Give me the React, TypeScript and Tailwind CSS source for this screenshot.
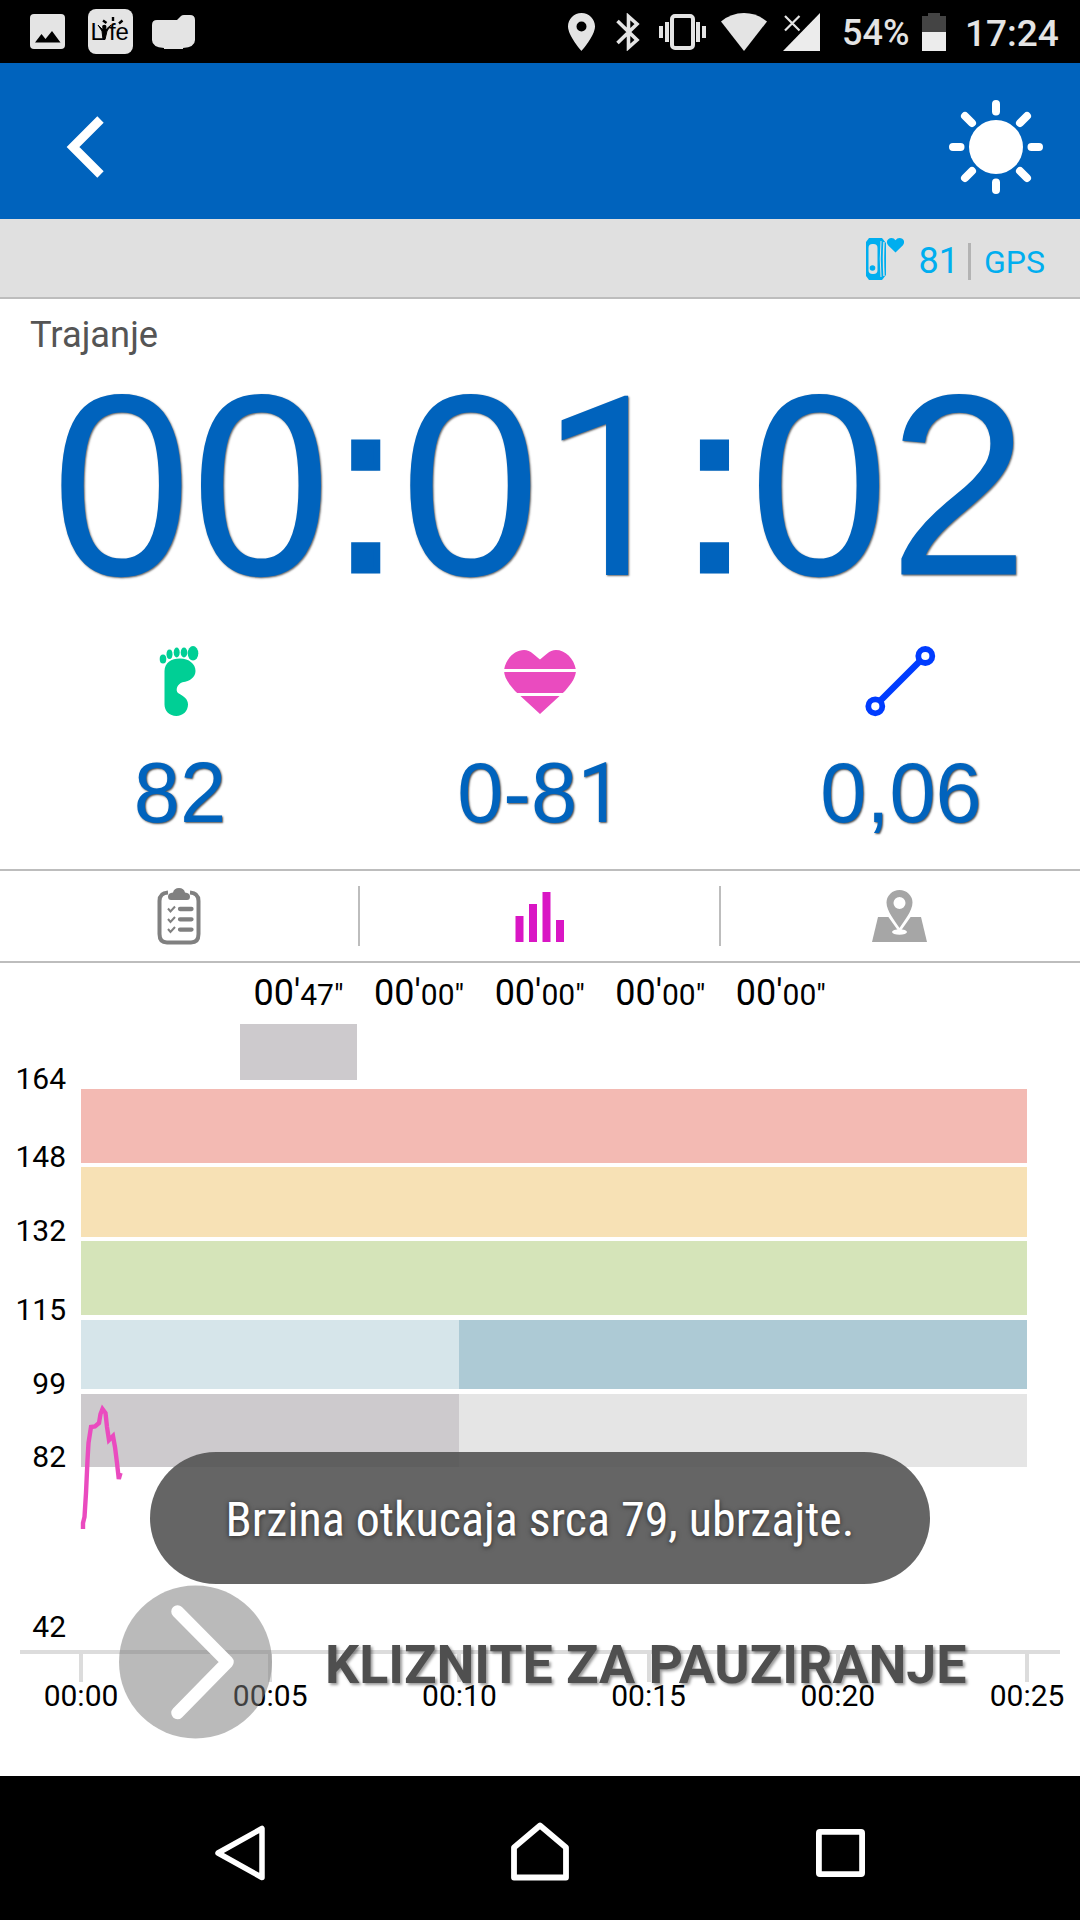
import React from 'react'
import clsx from 'clsx'

const zoneTimes = ['47', '00', '00', '00', '00']

const heartLabels = [
  { value: 164, height: 'h-[78px]' },
  { value: 148, height: 'h-[78px]' },
  { value: 132, height: 'h-[74px]' },
  { value: 115, height: 'h-[79px]' },
  { value: 99, height: 'h-[74px]' },
  { value: 82, height: 'h-[73px]' },
  { value: 42, height: 'h-[170px]' },
]

const minutes = ['00:00', '00:05', '00:10', '00:15', '00:20', '00:25']

const digits = "font-['Liberation_Sans',Arial,sans-serif] text-[#0063bd] leading-none"

const StatusBar = () => (
  <div className="flex h-[63px] items-center bg-black text-[#e4e4e4]">
    <svg className="ml-[30px] h-[35px] w-[35px]" viewBox="0 0 35 35">
      <rect width="35" height="35" rx="4" fill="#e4e4e4" />
      <path d="M5 28.5 L11.5 20 L15.5 25 L22 17 L30.5 28.5Z" fill="#000" />
    </svg>
    <svg className="ml-[23px] h-[45px] w-[45px]" viewBox="0 0 45 45">
      <rect width="45" height="45" rx="8" fill="#e4e4e4" />
      <text y="31" fontFamily="Liberation Sans, sans-serif" fontSize="24" fill="#000">
        <tspan x="2.5">L</tspan>
        <tspan x="21">f</tspan>
        <tspan x="27.5">e</tspan>
      </text>
      {/* the "y" of the logo is a figure with raised arms */}
      <circle cx="16.3" cy="18" r="2.2" fill="#000" />
      <path d="M10 16 L14 22 L15 30.5 H17 L19 22 L23 16 L18.5 20 H14Z" fill="#000" stroke="#000" strokeWidth="1" />
      <path d="M15 11.5 L18.5 14 M25 8 V12 M34.5 11.5 L31 14.5" stroke="#000" strokeWidth="2.4" />
    </svg>
    <svg className="ml-[19px] h-[34px] w-[43px]" viewBox="0 0 43 34">
      <path d="M5 5 H25 L29 1 Q30 0 32 0 H38 Q43 0 43 5 V25 Q43 32 31 33 V34 H12 V33 Q0 32 0 25 V10 Q0 5 5 5Z" fill="#e4e4e4" />
    </svg>

    <svg className="ml-[373px] h-[38px] w-[27px]" viewBox="0 0 27 38">
      <path fillRule="evenodd" d="M13.5 0 C6 0 0 6 0 13.3 C0 23 13.5 38 13.5 38 S27 23 27 13.3 C27 6 21 0 13.5 0Z M13.5 8.5 a5 5 0 1 1 0 10 a5 5 0 0 1 0 -10Z" fill="#e4e4e4" />
    </svg>
    <svg className="ml-[21px] h-[38px] w-[24px]" viewBox="0 0 24 38">
      <path d="M1.5 8 L21 27 L12.5 34.5 V3.5 L21 11 L1.5 30" stroke="#e4e4e4" strokeWidth="3.6" fill="none" />
    </svg>
    <svg className="ml-[19px] h-[36px] w-[47px]" viewBox="0 0 47 36">
      <rect x="13" y="2" width="21" height="32" rx="3" stroke="#e4e4e4" strokeWidth="4" fill="none" />
      <path d="M2 12 V24 M8 8 V28 M39 8 V28 M45 12 V24" stroke="#e4e4e4" strokeWidth="4" />
    </svg>
    <svg className="ml-[15px] h-[38px] w-[46px]" viewBox="0 0 46 38">
      <path d="M23 38 L0 8.5 Q10 0 23 0 T46 8.5Z" fill="#e4e4e4" />
    </svg>
    <svg className="ml-[16px] h-[38px] w-[37px]" viewBox="0 0 37 38">
      <path d="M37 0 V38 H0Z" fill="#ececec" />
      <path d="M2 3 L16.5 17.5 M16.5 3 L2 17.5" stroke="#e4e4e4" strokeWidth="2.2" />
    </svg>
    <span className="ml-[22px] mt-[3px] w-[71px] text-[36px] font-medium leading-none whitespace-nowrap">54%</span>
    <svg className="ml-[9px] h-[38px] w-[24px]" viewBox="0 0 24 38">
      <path d="M6 0 H18 V3 H24 V19 H0 V3 H6Z" fill="#444" />
      <path d="M0 19 H24 V38 H0Z" fill="#ececec" />
    </svg>
    <span className="ml-[19px] mt-[3px] text-[37px] font-medium leading-none">17:24</span>
  </div>
)

const Header = () => (
  <header className="flex h-[156px] items-center justify-between bg-[#0063bd] pl-[64px] pr-[35px]">
    <svg className="mt-[12px] h-[64px] w-[42px]" viewBox="0 0 42 64">
      <path d="M36.5 4.5 L9 32 L36.5 59.5" stroke="#fff" strokeWidth="9" fill="none" />
    </svg>
    <svg className="mt-[12px] h-[98px] w-[98px]" viewBox="-49 -49 98 98">
      <circle r="27" fill="#fff" />
      <path
        d="M0 -35.5 V-43 M0 35.5 V43 M-35.5 0 H-43 M35.5 0 H43 M-24 -24 L-31 -31 M24 -24 L31 -31 M-24 24 L-31 31 M24 24 L31 31"
        stroke="#fff"
        strokeWidth="8"
        strokeLinecap="round"
      />
    </svg>
  </header>
)

const DeviceBar = () => (
  <div className="flex h-[80px] items-center justify-end border-b-2 border-[#bdbdbd] bg-[#e0e0e0] pr-[35px] text-[#00aeef]">
    <svg className="mt-[2px] h-[42px] w-[38px]" viewBox="0 0 38 42">
      <path d="M3 0 H16 L20 5 V37 L16 42 H3 L0 38 V4Z" fill="#00aeef" />
      <rect x="2.5" y="6" width="9" height="30" rx="4" fill="#e0e0e0" />
      <circle cx="6.5" cy="30" r="2.8" fill="#00aeef" />
      <path d="M15 3 Q13.5 21 15 39" stroke="#e0e0e0" strokeWidth="1" fill="none" />
      <path d="M18 4 Q17 21 18 38" stroke="#e0e0e0" strokeWidth="1.4" fill="none" />
      <path d="M29.5 14.5 L22.3 7.5 C19 3.5 22 0 25.5 0 Q28 0 29.5 2.2 Q31 0 33.5 0 C37 0 40 3.5 36.7 7.5Z" fill="#00aeef" />
    </svg>
    <span className="ml-[15px] mt-[6px] text-[36px] leading-none">81</span>
    <span className="ml-[9px] mt-[6px] h-[37px] w-[3px] bg-[#b3b3b3]" />
    <span className="ml-[13px] mt-[8px] text-[32px] leading-none">GPS</span>
  </div>
)

const Colon = () => (
  <span className="px-[2.6px] align-[4px] text-[232px] leading-none [-webkit-text-stroke:7px_#0063bd] [stroke-linejoin:round]">:</span>
)

const Timer = () => (
  <div className="pt-[15px]">
    <p className="pl-[30px] text-[36.3px] leading-[42px] text-[#555]">Trajanje</p>
    <div className={clsx(digits, 'mt-[4px] h-[250px] scale-y-[1.03] text-center text-[251px] whitespace-nowrap [text-shadow:1px_1px_2px_rgba(0,0,0,0.6)]')}>
      00<Colon />0<span className="px-[1.2px] font-[Roboto] text-[244px] leading-none">1</span><Colon />02
    </div>
  </div>
)

const FootIcon = () => (
  <svg className="h-[72px] w-[42px]" viewBox="0 0 42 72">
    <g fill="#00cf95">
      <ellipse cx="4" cy="14" rx="3.3" ry="4.5" />
      <ellipse cx="10.5" cy="9.3" rx="3" ry="4.7" />
      <ellipse cx="17.7" cy="7.5" rx="3" ry="5" />
      <ellipse cx="25" cy="7.5" rx="3.3" ry="5" />
      <ellipse cx="34" cy="8.3" rx="5.3" ry="7.2" />
      <path d="M5.5 26 C5.5 18 12 13.5 21 13.5 C30 13.5 36.5 19 36.5 26 C36.5 32 31 36.5 23.5 37.3 C18.5 39 16 45 19 48 C25 51.5 29 54 29 59.5 C29 66 24 71 17.3 71 C10.5 71 5.5 66 5.5 59.5Z" />
    </g>
  </svg>
)

const HeartIcon = () => (
  <svg className="h-[72px] w-[74px]" viewBox="0 0 74 72">
    <path d="M37 69 L12 46 C5 38 1 32 1 25 C3 13 12 5 21 5 C28 5 32 11 37 14.5 C42 11 46 5 53 5 C62 5 71 13 73 25 C73 32 69 38 62 46Z" fill="#ea4bbf" />
    <path d="M0 25.5 H74 M0 49.5 H74" stroke="#fff" strokeWidth="3" />
  </svg>
)

const DistanceIcon = () => (
  <svg className="h-[72px] w-[72px]" viewBox="0 0 72 72">
    <path d="M17 55 L55 17" stroke="#003cff" strokeWidth="6.5" />
    <circle cx="61.3" cy="11" r="7" fill="#fff" stroke="#003cff" strokeWidth="5.8" />
    <circle cx="11.3" cy="61.3" r="7" fill="#fff" stroke="#003cff" strokeWidth="5.8" />
  </svg>
)

const value = "mt-[34px] scale-y-[1.028] text-[83px] whitespace-nowrap [text-shadow:1px_1px_2px_rgba(0,0,0,0.7)]"

const Metrics = () => (
  <div className="grid h-[259px] grid-cols-3 pt-[35px]">
    <div className="flex flex-col items-center">
      <FootIcon />
      <span className={clsx(digits, value)}>82</span>
    </div>
    <div className="flex flex-col items-center">
      <HeartIcon />
      <span className={clsx(digits, value)}>0-8<span className="pl-[0.5px] font-[Roboto] text-[80.5px] leading-none">1</span></span>
    </div>
    <div className="flex flex-col items-center">
      <DistanceIcon />
      <span className={clsx(digits, value, 'pl-[2px]')}>0,06</span>
    </div>
  </div>
)

const Tabs = () => (
  <div className="flex h-[94px] items-center border-y-2 border-[#bdbdbd]">
    <button className="flex h-[60px] w-[360px] items-center justify-center border-r-2 border-[#bdbdbd]">
      <svg className="h-[58px] w-[44px]" viewBox="0 0 44 58">
        <path d="M11 5.5 Q2.5 6 2.5 14 V47 Q2.5 55.5 10 55.5 H34 Q41.5 55.5 41.5 47 V14 Q41.5 6 33 5.5" stroke="#808080" strokeWidth="4" fill="none" />
        <path d="M14 13 Q11 13 11 9.5 Q11 6 16 5.5 Q17 1 22 1 Q27 1 28 5.5 Q33 6 33 9.5 Q33 13 30 13Z" fill="#808080" />
        <path d="M23 22 H34.5 M23 32.3 H34.5 M23 42.6 H34.5" stroke="#808080" strokeWidth="4.3" strokeLinecap="round" />
        <path d="M11 21.5 L13.5 24.5 L18 19.5 M11 32 L13.5 35 L18 30 M11 42 L13.5 45 L18 40" stroke="#808080" strokeWidth="2" fill="none" />
      </svg>
    </button>
    <button className="flex h-[60px] w-[361px] items-center justify-center border-r-2 border-[#bdbdbd]">
      <svg className="mt-[2px] h-[50px] w-[50px]" viewBox="0 0 50 50">
        <path d="M0.5 24 H8.5 V50 H0.5Z M14 12 H22 V50 H14Z M27.5 0 H35.5 V50 H27.5Z M41 28 H49 V50 H41Z" fill="#d916c4" />
      </svg>
    </button>
    <button className="flex h-[60px] w-[357px] items-center justify-center">
      <svg className="h-[52px] w-[55px]" viewBox="0 0 55 52">
        <path d="M6 27 H49 L55 52 H0Z" fill="#a6a6a6" />
        <ellipse cx="27.5" cy="42" rx="7.5" ry="2.8" fill="#fff" />
        <path d="M27.5 41 L15.5 24 H39.5Z" fill="#fff" stroke="#fff" strokeWidth="2" />
        <path fillRule="evenodd" d="M27.5 38 C23 31 14.5 21 14.5 12.5 A13 12.5 0 0 1 40.5 12.5 C40.5 21 32 31 27.5 38Z M27.5 7 a6 6 0 1 0 0 12 a6 6 0 0 0 0 -12Z" fill="#a6a6a6" />
      </svg>
    </button>
  </div>
)

const ZoneTimes = () => (
  <div className="flex gap-[3.6px] pl-[240px]">
    {zoneTimes.map((seconds, index) => (
      <div key={index} className="w-[117px]">
        <p className="h-[61px] pt-[9px] text-center text-[36px] leading-[42px] text-black">
          00'<span className="text-[30px]">{seconds}"</span>
        </p>
        <div className={clsx('h-[56px]', index === 0 && 'bg-[#cdcacd]')} />
      </div>
    ))}
  </div>
)

const HeartChart = () => (
  <div className="relative flex h-[696px]">
    <div className="-mt-[64px] flex w-[66px] flex-col text-right text-[30px] leading-[30px] text-black">
      {heartLabels.map((label) => (
        <div key={label.value} className={clsx('flex items-end justify-end', label.height)}>{label.value}</div>
      ))}
    </div>
    <div className="ml-[15px] flex w-[946px] flex-col pt-[9px]">
      <div className="h-[74px] bg-[#f3bab3]" />
      <div className="mt-[4px] h-[70px] bg-[#f7e1b5]" />
      <div className="mt-[4px] h-[74px] bg-[#d5e4b9]" />
      <div className="mt-[5px] flex h-[69px] bg-[#adcad5]">
        <div className="w-[378px] bg-[#d6e5ea]" />
      </div>
      <div className="mt-[5px] flex h-[73px] bg-[#e5e5e5]">
        <div className="w-[378px] bg-[#cdcacd]" />
      </div>
      <div className="-mx-[61px] mt-[183px] h-[4px] w-[1040px] bg-[#dcdcdc]" />
      <div className="-ml-[81px] flex w-[1110px]">
        {minutes.map((minute) => (
          <div key={minute} className="-mr-[0.8px] flex w-[190px] shrink-0 -translate-x-[14px] flex-col items-center">
            <div className="h-[28px] w-[4px] bg-[#dcdcdc]" />
            <span className="-mt-[1px] text-[30px] leading-[30px] text-black">{minute}</span>
          </div>
        ))}
      </div>
    </div>
    <svg className="absolute left-[76px] top-[310px] h-[150px] w-[60px]" viewBox="76 1390 60 150">
      <path
        d="M83 1529 V1523 L84.5 1517 L86 1493 L87.5 1460 L88.5 1443 L91 1427 L95 1426.5 L99 1423 L100.5 1414 L102.5 1409 L105.5 1413 L107 1427 L109 1440 L113 1436 L115 1447 L117 1463 L118.8 1479 L120.5 1473"
        stroke="#ea4bbf"
        strokeWidth="4.4"
        fill="none"
      />
    </svg>
  </div>
)

const PauseSlider = () => (
  <div className="absolute left-[118px] top-[1585px] flex h-[154px] items-center">
    <svg className="h-[154px] w-[155px]" viewBox="0 0 155 154">
      <circle cx="77.5" cy="77" r="76.5" fill="#7b7b7b" fillOpacity="0.52" />
      <path d="M59.5 26.5 L109.5 77 L59.5 128" stroke="#fff" strokeWidth="12.5" strokeLinecap="round" strokeLinejoin="round" fill="none" />
    </svg>
    <span className="ml-[52px] mt-[5px] text-[53.7px] font-bold leading-none text-[#4f4f4f] whitespace-nowrap [text-shadow:2px_2px_3px_rgba(0,0,0,0.4)]">
      KLIZNITE ZA PAUZIRANJE
    </span>
  </div>
)

const Toast = () => (
  <div className="absolute left-[150px] top-[1452px] flex h-[132px] w-[780px] items-center justify-center rounded-full bg-[#505050]/88">
    <span className="mt-[4px] text-[48px] leading-none text-white whitespace-nowrap [font-stretch:75%] [text-shadow:0_1px_5px_rgba(0,0,0,0.6)]">
      Brzina otkucaja srca 79, ubrzajte.
    </span>
  </div>
)

const NavBar = () => (
  <nav className="flex h-[144px] items-center bg-black">
    <svg className="ml-[214px] mt-[10px] h-[58px] w-[52px]" viewBox="0 0 52 58">
      <path d="M48 4.5 V53.5 L4 29Z" stroke="#fff" strokeWidth="5.5" strokeLinejoin="round" fill="none" />
    </svg>
    <svg className="ml-[244px] mt-[6px] h-[60px] w-[60px]" viewBox="0 0 60 60">
      <path d="M4 26.5 L30 4.5 L56 26.5 V56.5 H4Z" stroke="#fff" strokeWidth="5.8" strokeLinejoin="round" fill="none" />
    </svg>
    <svg className="ml-[246px] mt-[10px] h-[48px] w-[49px]" viewBox="0 0 49 48">
      <rect x="2.9" y="2.9" width="43.2" height="42.2" rx="1" stroke="#fff" strokeWidth="5.8" fill="none" />
    </svg>
  </nav>
)

export default function App() {
  return (
    <div className="relative h-[1920px] w-[1080px] overflow-hidden bg-white font-[Roboto,sans-serif]">
      <StatusBar />
      <Header />
      <DeviceBar />
      <Timer />
      <Metrics />
      <Tabs />
      <ZoneTimes />
      <HeartChart />
      <NavBar />
      <PauseSlider />
      <Toast />
    </div>
  )
}
